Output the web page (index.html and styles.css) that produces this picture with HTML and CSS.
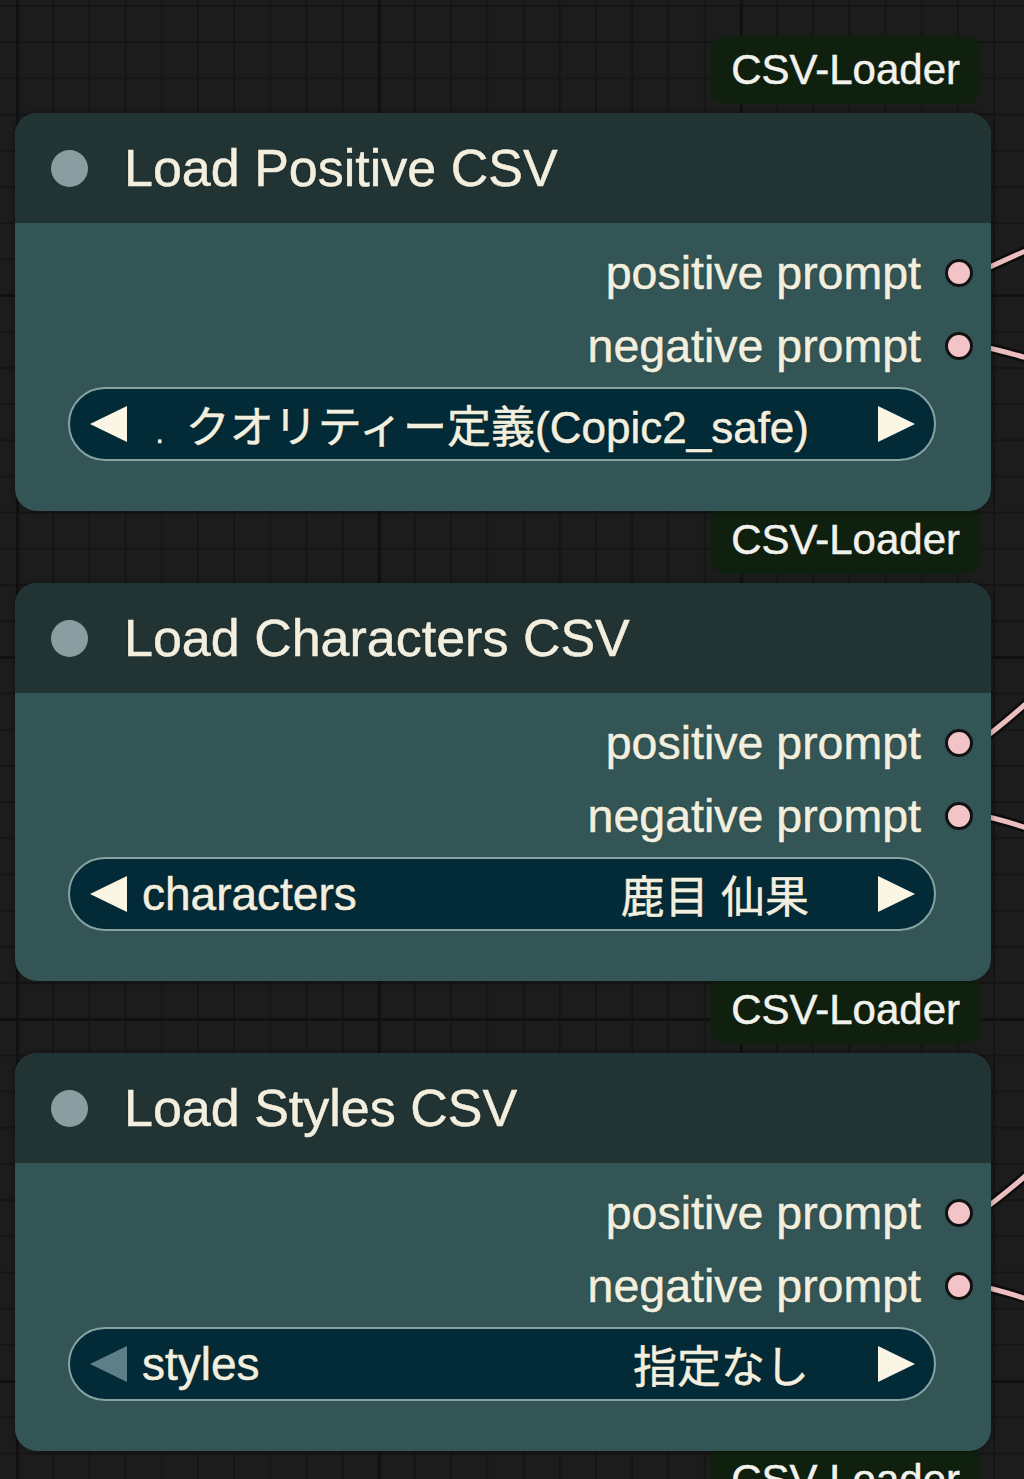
FILE: index.html
```html
<!DOCTYPE html>
<html lang="ja">
<head>
  <meta charset="UTF-8">
  <meta name="viewport" content="width=device-width, initial-scale=1.0">
  <title>CSV Loader nodes</title>
  <link rel="stylesheet" href="styles.css">
</head>
<body>
  <div class="canvas">
    <svg class="wires" width="1024" height="1479" viewBox="0 0 1024 1479">
      <g class="wire-shadow">
        <path d="M975 274 Q1000 262 1030 249"/>
        <path d="M975 345 Q1000 350 1030 359"/>
        <path d="M975 745 Q1000 727 1030 700"/>
        <path d="M975 814 Q1000 819 1030 829"/>
        <path d="M975 1216 Q1000 1198 1030 1172"/>
        <path d="M975 1285 Q1000 1290 1030 1300"/>
      </g>
      <g class="wire">
        <path d="M975 274 Q1000 262 1030 249"/>
        <path d="M975 345 Q1000 350 1030 359"/>
        <path d="M975 745 Q1000 727 1030 700"/>
        <path d="M975 814 Q1000 819 1030 829"/>
        <path d="M975 1216 Q1000 1198 1030 1172"/>
        <path d="M975 1285 Q1000 1290 1030 1300"/>
      </g>
    </svg>

    <div class="graph">
      <section class="group">
        <div class="badge">CSV-Loader</div>
        <div class="node">
          <div class="node-title">
            <span class="status-dot"></span>
            <span class="title-text">Load Positive CSV</span>
          </div>
          <div class="node-body">
            <div class="slot"><span>positive prompt</span><span class="slot-dot"></span></div>
            <div class="slot"><span>negative prompt</span><span class="slot-dot"></span></div>
            <div class="combo">
              <span class="arrow arrow-left"></span>
              <span class="combo-value"><span class="dot-mark">.</span>クオリティー定義(Copic2_safe)</span>
              <span class="arrow arrow-right"></span>
            </div>
          </div>
        </div>
      </section>

      <section class="group">
        <div class="badge">CSV-Loader</div>
        <div class="node">
          <div class="node-title">
            <span class="status-dot"></span>
            <span class="title-text">Load Characters CSV</span>
          </div>
          <div class="node-body">
            <div class="slot"><span>positive prompt</span><span class="slot-dot"></span></div>
            <div class="slot"><span>negative prompt</span><span class="slot-dot"></span></div>
            <div class="combo">
              <span class="arrow arrow-left"></span>
              <span class="combo-label">characters</span>
              <span class="combo-value">鹿目 仙果</span>
              <span class="arrow arrow-right"></span>
            </div>
          </div>
        </div>
      </section>

      <section class="group">
        <div class="badge">CSV-Loader</div>
        <div class="node">
          <div class="node-title">
            <span class="status-dot"></span>
            <span class="title-text">Load Styles CSV</span>
          </div>
          <div class="node-body">
            <div class="slot"><span>positive prompt</span><span class="slot-dot"></span></div>
            <div class="slot"><span>negative prompt</span><span class="slot-dot"></span></div>
            <div class="combo">
              <span class="arrow arrow-left disabled"></span>
              <span class="combo-label">styles</span>
              <span class="combo-value">指定なし</span>
              <span class="arrow arrow-right"></span>
            </div>
          </div>
        </div>
      </section>

      <section class="group">
        <div class="badge">CSV-Loader</div>
      </section>
    </div>
  </div>
</body>
</html>
```

FILE: styles.css
```css
:root {
  --canvas: #1c1c1c;
  --grid-minor: #151515;
  --grid-major: #111111;
  --title-bg: #223333;
  --body-bg: #335555;
  --badge-bg: #0f200f;
  --text: #f3efdf;
  --combo-bg: #032a37;
  --combo-border: #86a2a2;
  --wire: #ebbdbf;
  --slot: #f2c4c7;
}

html, body {
  margin: 0;
  padding: 0;
}

body {
  width: 1024px;
  height: 1479px;
  overflow: hidden;
  font-family: 'Liberation Sans', 'Noto Sans CJK JP', sans-serif;
  color: var(--text);
  -webkit-text-stroke: 0.5px currentColor;
  text-shadow: 0 0 2px rgba(0, 0, 0, 0.4);
  background-color: var(--canvas);
  background-image:
    linear-gradient(to right, var(--grid-major) 3px, transparent 3px),
    linear-gradient(to bottom, var(--grid-major) 3px, transparent 3px),
    linear-gradient(to right, var(--grid-minor) 2px, transparent 2px),
    linear-gradient(to bottom, var(--grid-minor) 2px, transparent 2px);
  background-size: 362px 100%, 100% 362px, 36.2px 100%, 100% 36.2px;
  background-position: 16px 0, 0 294px, 16px 0, 0 5px;
}

.canvas {
  position: relative;
  height: 100%;
}

/* links drawn under the nodes */
.wires {
  position: absolute;
  top: 0;
  left: 0;
  z-index: 0;
}

.wires path {
  fill: none;
  stroke-linecap: round;
}

.wire-shadow path {
  stroke: #0c0c0c;
  stroke-width: 10;
}

.wire path {
  stroke: var(--wire);
  stroke-width: 5;
}

.graph {
  position: relative;
  z-index: 1;
  display: flex;
  flex-direction: column;
  padding: 36px 0 0 15px;
  width: 976px;
}

.group {
  display: flex;
  flex-direction: column;
}

.group + .group {
  margin-top: -5px;
}

.badge {
  align-self: flex-end;
  margin-right: 10px;
  height: 68px;
  padding: 0 21px;
  border-radius: 16px;
  background: var(--badge-bg);
  color: #f2f2ec;
  font-size: 42px;
  line-height: 68px;
  white-space: nowrap;
}

.node {
  position: relative;
  z-index: 2;
  margin-top: 9px;
  height: 398px;
  border-radius: 22px;
  overflow: hidden;
  background: var(--body-bg);
  box-shadow: 0 0 6px rgba(0, 0, 0, 0.35);
}

.node-title {
  height: 110px;
  display: flex;
  align-items: center;
  background: var(--title-bg);
  padding-left: 36px;
  gap: 36px;
}

.status-dot {
  width: 37px;
  height: 37px;
  border-radius: 50%;
  background: #8a9da1;
  flex: none;
}

.title-text {
  font-size: 52px;
  white-space: nowrap;
}

.node-body {
  padding: 13px 0 50px;
}

.slot {
  height: 73px;
  display: flex;
  align-items: center;
  justify-content: flex-end;
  gap: 24px;
  padding-right: 18px;
  font-size: 46.5px;
  white-space: nowrap;
}

.slot-dot {
  width: 22px;
  height: 22px;
  border-radius: 50%;
  border: 3px solid #121212;
  background: var(--slot);
  text-shadow: none;
}

.combo {
  margin: 5px 55px 0 53px;
  height: 70px;
  border: 2px solid var(--combo-border);
  border-radius: 37px;
  background: var(--combo-bg);
  display: flex;
  align-items: center;
  padding: 0 19px 0 20px;
  font-size: 44px;
  white-space: nowrap;
}

.arrow {
  width: 0;
  height: 0;
  border-top: 18px solid transparent;
  border-bottom: 18px solid transparent;
  flex: none;
}

.arrow-left {
  border-right: 37px solid #fbf5e4;
}

.arrow-left.disabled {
  border-right-color: #5f7f88;
}

.arrow-right {
  border-left: 37px solid #fbf5e4;
}

.combo-label {
  margin-left: 15px;
  font-size: 46px;
}

.combo-value {
  flex: 1;
  text-align: right;
  margin-right: 69px;
  overflow: hidden;
}

.dot-mark {
  font-size: 30px;
  margin-right: 22px;
}
```
